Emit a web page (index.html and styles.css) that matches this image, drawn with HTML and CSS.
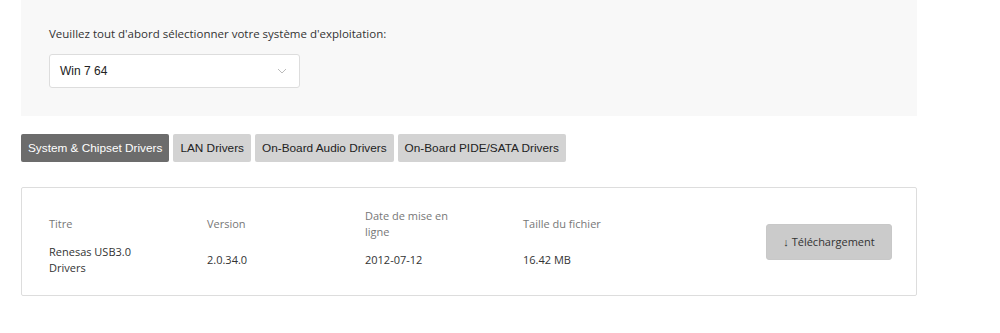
FILE: index.html
```html
<!DOCTYPE html>
<html lang="fr">
<head>
    <meta charset="UTF-8">
    <title>Pilotes</title>
    <link rel="stylesheet" href="styles.css">
</head>
<body>

<div class="os-panel">
    <p class="os-label">Veuillez tout d'abord sélectionner votre système d'exploitation:</p>
    <div class="os-select">
        <span>Win 7 64</span>
        <svg class="caret" width="10" height="6" viewBox="0 0 10 6"><path d="M1 1l4 4 4-4" fill="none" stroke="#bbb" stroke-width="1"/></svg>
    </div>
</div>

<div class="tabs">
    <button class="active">System &amp; Chipset Drivers</button>
    <button>LAN Drivers</button>
    <button>On-Board Audio Drivers</button>
    <button>On-Board PIDE/SATA Drivers</button>
</div>

<div class="driver-card">
    <div class="driver-grid">
        <div class="head">Titre</div>
        <div class="head">Version</div>
        <div class="head">Date de mise en ligne</div>
        <div class="head">Taille du fichier</div>
        <div class="val">Renesas USB3.0 Drivers</div>
        <div class="val">2.0.34.0</div>
        <div class="val">2012-07-12</div>
        <div class="val">16.42 MB</div>
    </div>
    <button class="download">↓ Téléchargement</button>
</div>

</body>
</html>
```

FILE: styles.css
```css
body {
    margin: 0;
    padding: 0 83px 0 21px;
    font-family: "Open Sans", sans-serif;
    color: #333;
    background: #fff;
}

.os-panel {
    background: #f8f8f8;
    padding: 26px 28px 26px;
    height: 64px;
}

.os-label {
    margin: 0 0 12px;
    font-size: 11.5px;
    line-height: 16px;
    color: #333;
}

.os-select {
    width: 229px;
    height: 32px;
    box-sizing: content-box;
    padding: 0 10px;
    background: #fff;
    border: 1px solid #ddd;
    border-radius: 3px;
    display: flex;
    align-items: center;
    justify-content: space-between;
    font-family: "Liberation Sans", Arial, sans-serif;
    font-size: 12px;
    color: #222;
}

.caret {
    margin-right: 2px;
}

.tabs {
    display: flex;
    gap: 4px;
    margin-top: 18px;
}

.tabs button {
    height: 28px;
    padding: 0 7px;
    border: none;
    border-radius: 2px;
    background: #d3d3d3;
    color: #222;
    font-family: "Liberation Sans", Arial, sans-serif;
    font-size: 11.8px;
    cursor: pointer;
}

.tabs button.active {
    background: #6c6c6c;
    color: #fff;
}

.driver-card {
    margin-top: 25px;
    height: 107px;
    border: 1px solid #ddd;
    border-radius: 2px;
    display: flex;
    align-items: center;
    padding: 0 24px 0 27px;
}

.driver-grid {
    display: grid;
    grid-template-columns: 158px 158px 158px 158px;
    grid-template-rows: 40px 32px;
    align-items: center;
    font-size: 11px;
    line-height: 16px;
    margin-top: -3px;
}

.driver-grid div {
    padding-right: 60px;
}

.driver-grid .head {
    color: #777;
}

.driver-grid .val {
    color: #333;
}

.download {
    margin-left: auto;
    width: 126px;
    height: 36px;
    border: 1px solid #c8c8c8;
    border-radius: 3px;
    background: #cbcbcb;
    color: #333;
    font-family: "Open Sans", sans-serif;
    font-size: 11px;
    cursor: pointer;
}
```
